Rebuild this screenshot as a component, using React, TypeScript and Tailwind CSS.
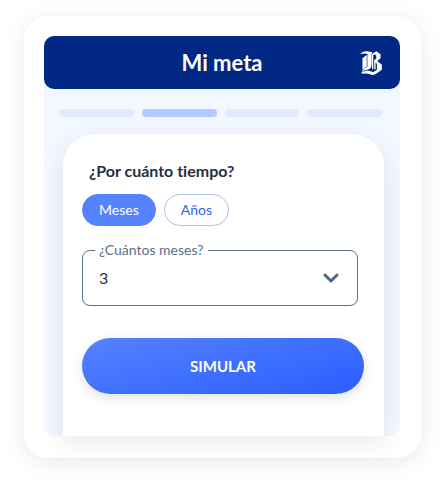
import { useState } from "react";

function BrandMark() {
  return (
    <svg viewBox="0 0 66 73" className="h-6 w-[22px]" fill="#fff" role="img" aria-label="B">
      <path d="M0 10C5 3 13 0 21 1L38 4L30 11L20 9C12 7 7 8 0 10Z" />
      <path d="M7 22L20 12L20 47L7 57Z" />
      <path d="M22 11L35 5L35 41C35 50 29 56 20 58C12 59 8 61 4 66C7 58 12 53 22 48Z" />
      <path d="M37 8L49 1L62 10L62 22L52 31L66 41L66 57L48 70L39 73C30 71 22 66 8 69L3 66C18 56 29 60 41 64L51 57L51 39L43 33L43 28L49 23L49 14L43 10L40 13L40 53L36 56L36 10Z" />
      <path d="M43 28L47 26L47 54L43 57Z" />
    </svg>
  );
}

const steps = [false, true, false, false];

export default function App() {
  const [unit, setUnit] = useState("Meses");
  const [months, setMonths] = useState("3");

  return (
    <div className="bg-white pt-4 pr-[21px] pb-7 pl-6 font-['Lato','Noto_Sans',sans-serif] [font-variant-ligatures:none]">
      <main className="rounded-3xl bg-white pt-5 pr-[21px] pb-[22px] pl-5 shadow-[0_4px_24px_rgba(0,0,0,0.09)]">
        <div className="rounded-[10px] bg-[#f3f7ff]">
          <header className="grid h-[53px] grid-cols-[1fr_auto_1fr] items-center rounded-[10px] bg-[#002884] px-[18px] text-white">
            <h1 className="col-start-2 text-[22px] leading-8 font-bold">Mi meta</h1>
            <div className="justify-self-end">
              <BrandMark />
            </div>
          </header>

          <div className="flex gap-2 pt-5 pr-[18px] pb-[17px] pl-[15px]">
            {steps.map((active, i) => (
              <div key={i} className={`h-2 flex-1 rounded-full ${active ? "bg-[#b3c9ff]" : "bg-[#e1e9ff]"}`} />
            ))}
          </div>

          <section className="mr-4 ml-[19px] rounded-t-[32px] bg-white pt-[25px] pr-5 pb-[42px] pl-[19px] shadow-[0_8px_24px_rgba(40,70,70,0.1)]">
            <h2 className="px-[7px] text-[16px] leading-6 font-bold text-[#252f3f]">¿Por cuánto tiempo?</h2>

            <div className="mt-[11px] flex gap-2">
              {["Meses", "Años"].map((name) => (
                <button
                  key={name}
                  type="button"
                  aria-pressed={unit === name}
                  onClick={() => setUnit(name)}
                  className={`h-8 rounded-full border px-4 text-[14px] leading-5 ${
                    unit === name
                      ? "border-[#5582ff] bg-[#5582ff] text-white"
                      : "border-[#a9befa] bg-white text-[#2962ff]"
                  }`}
                >
                  {name}
                </button>
              ))}
            </div>

            <fieldset className="mt-3.5 mr-1.5 rounded-lg border border-[#5b708b] px-3 pb-3">
              <legend className="px-1 text-[14px] leading-5 text-[#5b708b]">
                <label htmlFor="months">¿Cuántos meses?</label>
              </legend>
              <div className="grid items-center pt-[3px]">
                <select
                  id="months"
                  value={months}
                  onChange={(e) => setMonths(e.target.value)}
                  className="col-start-1 row-start-1 h-[30px] w-full appearance-none bg-transparent px-1 text-[16px] text-[#252f3f]"
                >
                  {["3", "6", "9", "12"].map((n) => (
                    <option key={n}>{n}</option>
                  ))}
                </select>
                <svg
                  viewBox="0 0 16 10"
                  className="pointer-events-none col-start-1 row-start-1 mr-1.5 h-2.5 w-4 justify-self-end"
                  fill="none"
                  stroke="#50657f"
                  strokeWidth="3"
                  strokeLinecap="round"
                  strokeLinejoin="round"
                  aria-hidden="true"
                >
                  <path d="M2 2L8 8L14 2" />
                </svg>
              </div>
            </fieldset>

            <button
              type="button"
              className="mt-8 h-14 w-full rounded-full bg-[linear-gradient(165deg,#5582ff,#2b5dff)] text-[15px] leading-5 font-bold text-white shadow-[0_4px_12px_rgba(40,60,60,0.14)]"
            >
              SIMULAR
            </button>
          </section>
        </div>
      </main>
    </div>
  );
}
